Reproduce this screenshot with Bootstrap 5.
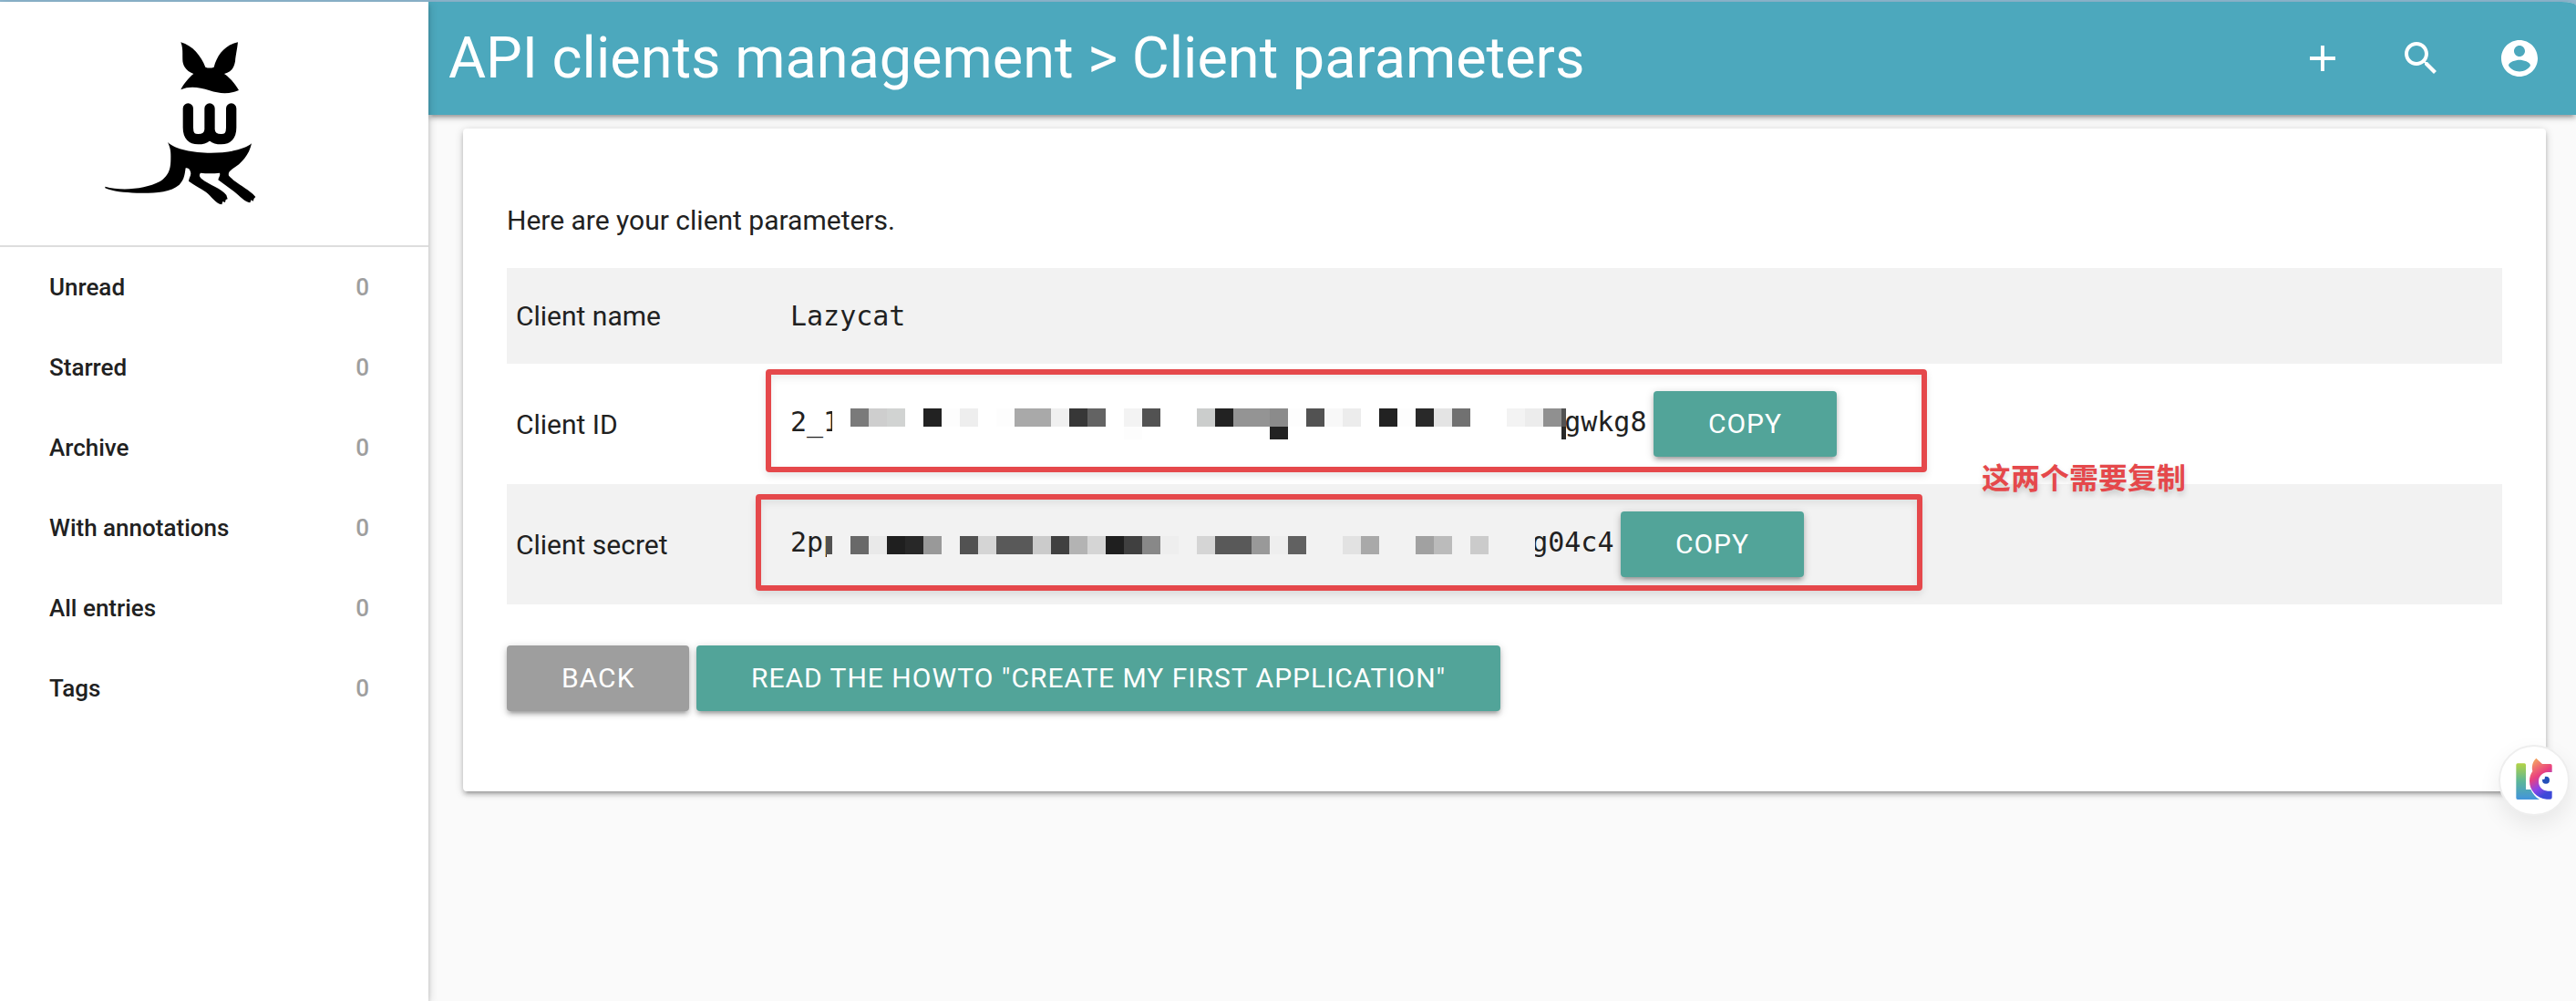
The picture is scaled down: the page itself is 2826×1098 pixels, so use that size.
<!DOCTYPE html>
<html lang="en">
<head>
<meta charset="utf-8">
<meta name="viewport" content="width=device-width, initial-scale=1">
<title>API clients management</title>
<link rel="stylesheet" href="https://cdn.jsdelivr.net/npm/bootstrap@5.3.0/dist/css/bootstrap.min.css">
<style>
  :root { --teal: #52a499; --cyan: #4ca8bd; --signal: #e5484b; --ink: #212121; }
  body { font-family: Roboto, "Liberation Sans", "Noto Sans CJK SC", sans-serif; font-size: 30px; line-height: 45px; color: var(--ink); background: #fafafa; }
  .window-edge { background: #8fb9d1; padding-top: 2px; }
  .lift { box-shadow: 0 4px 4px rgba(0,0,0,.14), 0 6px 2px -4px rgba(0,0,0,.12), 0 2px 10px rgba(0,0,0,.2); }

  .side { width: 470px; min-height: calc(100vh - 2px); background: #fff; z-index: 3; }
  .side-logo { height: 269px; padding: 28px 0 0 100px; border-bottom: 2px solid #ddd; }
  .side-link { height: 88px; padding: 0 65px 0 54px; font-size: 26px; font-weight: 500; color: var(--ink); text-decoration: none; }
  .side-count { color: #9e9e9e; }

  .page { background: #fafafa; border-top-right-radius: 16px 4px; }
  .topbar { min-height: 124px; padding: 0 8px 0 22px; background: var(--cyan); border-top-right-radius: 16px 4px; position: relative; z-index: 2; }
  .topbar h1 { font-size: 63px; line-height: 124px; font-weight: 400; color: #fff; }
  .tool { padding: 0 30px; color: #fff; line-height: 0; }

  .panel { margin: 15px 33px 0 38px; padding: 78px 48px 88px; background: #fff; border-radius: 4px; }
  .panel-intro { margin-bottom: 30px; }
  .params { color: var(--ink); --bs-table-color: var(--ink); margin-bottom: 45px; }
  .params > tbody > tr > * { padding: 30px 10px; font-weight: 400; }
  .params > tbody > tr:nth-child(odd) > * { background: #f2f2f2; }
  .params th { width: 301px; }
  .params code { font-family: "DejaVu Sans Mono", monospace; font-size: 30px; color: var(--ink); }

  .act { height: 72px; padding: 0 60px; border: 0; border-radius: 4px; font-size: 30px; line-height: 72px; letter-spacing: 1px; text-transform: uppercase; color: #fff; background: var(--teal); }
  .act:hover { color: #fff; background: #469589; }
  .act-muted { background: #9e9e9e; }

  .mosaic { position: relative; z-index: 1; height: 36px; vertical-align: -11px; margin-left: -8px; overflow: visible; }
  .frame { position: absolute; border: 6px solid var(--signal); border-radius: 4px; box-shadow: 0 4px 8px rgba(0,0,0,.1), inset 0 4px 8px rgba(0,0,0,.08); pointer-events: none; }
  .frame-id { left: -17px; top: 6px; width: 1274px; height: 113px; }
  .frame-secret { left: -28px; top: 11px; width: 1280px; height: 106px; }
  .remark { position: absolute; left: 1317px; top: -32px; font: 700 32px/46px "Noto Sans CJK SC", sans-serif; color: var(--signal); text-shadow: 0 4px 6px rgba(0,0,0,.18); white-space: nowrap; }

  .helper { position: fixed; right: 7px; top: 817px; width: 78px; height: 78px; padding: 0; border: 2px solid #eee; border-radius: 50%; background: #fff; box-shadow: 0 10px 24px rgba(0,0,0,.08); z-index: 5; line-height: 0; }
</style>
<script src="https://cdn.jsdelivr.net/npm/bootstrap@5.3.0/dist/js/bootstrap.bundle.min.js"></script>
</head>
<body>
<div class="window-edge d-flex">
  <aside class="side lift position-relative flex-shrink-0">
    <div class="side-logo">
      <a href="#" aria-label="Home">
        <svg class="d-block" width="200" height="210" viewBox="0 0 600 630" fill="#000">
          <path d="M295 49C335 60 362 95 376 131Q390 136 404 131C415 90 440 58 483 49C480 75 476 90 474 112C470 135 460 147 438 153C460 168 475 188 486 207C450 222 420 217 390 208C355 197 325 192 295 205C305 185 322 165 337 153C310 143 301 122 301 108C300 85 303 70 295 49Z"/>
          <path d="M319 267V330C319 358 332 368 352 368C375 368 390 358 390 335V267M461 267V330C461 358 448 368 428 368C405 368 390 358 390 335" fill="none" stroke="#000" stroke-width="34" stroke-linecap="round"/>
          <path d="M252 378C300 424 480 424 528 382C520 420 495 448 465 466C453 475 451 480 453 488C470 508 510 528 532 548L541 558L536 563L533 572L527 568L523 577C505 575 490 555 470 540L418 502C420 492 426 488 423 479Q390 483 360 479C355 485 356 492 362 497C390 520 430 530 445 552L449 565L443 567L441 576L433 573L430 583C410 580 395 555 378 542C360 530 340 520 321 506C322 495 328 490 328 480C325 466 320 463 311 463C308 480 308 500 290 518C260 545 200 546 150 545C110 544 70 540 46 529V524C100 540 180 532 225 508C262 485 262 455 262 425C262 405 260 395 252 378Z"/>
        </svg>
      </a>
    </div>
    <nav>
      <a class="side-link d-flex align-items-center justify-content-between" href="#"><span>Unread</span><span class="side-count">0</span></a>
      <a class="side-link d-flex align-items-center justify-content-between" href="#"><span>Starred</span><span class="side-count">0</span></a>
      <a class="side-link d-flex align-items-center justify-content-between" href="#"><span>Archive</span><span class="side-count">0</span></a>
      <a class="side-link d-flex align-items-center justify-content-between" href="#"><span>With annotations</span><span class="side-count">0</span></a>
      <a class="side-link d-flex align-items-center justify-content-between" href="#"><span>All entries</span><span class="side-count">0</span></a>
      <a class="side-link d-flex align-items-center justify-content-between" href="#"><span>Tags</span><span class="side-count">0</span></a>
    </nav>
  </aside>

  <div class="page flex-grow-1">
    <header class="topbar lift d-flex align-items-center justify-content-between">
      <h1 class="m-0">API clients management &gt; Client parameters</h1>
      <div class="d-flex">
        <a class="tool" href="#" aria-label="Add"><svg width="48" height="48" viewBox="0 0 24 24" fill="currentColor"><path d="M19 13h-6v6h-2v-6H5v-2h6V5h2v6h6v2z"/></svg></a>
        <a class="tool" href="#" aria-label="Search"><svg width="48" height="48" viewBox="0 0 24 24" fill="currentColor"><path d="M15.5 14h-.79l-.28-.27C15.41 12.59 16 11.11 16 9.500 16 5.910 13.090 3 9.500 3S3 5.910 3 9.500 5.910 16 9.500 16c1.610 0 3.090-.59 4.230-1.570l.27.28v.79l5 4.990L20.490 19l-4.990-5zm-6 0C7.010 14 5 11.990 5 9.500S7.010 5 9.500 5 14 7.010 14 9.500 11.990 14 9.500 14z"/></svg></a>
        <a class="tool" href="#" aria-label="Account"><svg width="48" height="48" viewBox="0 0 24 24" fill="currentColor"><path d="M12 2C6.480 2 2 6.480 2 12s4.480 10 10 10 10-4.480 10-10S17.520 2 12 2zm0 3c1.660 0 3 1.340 3 3s-1.340 3-3 3-3-1.340-3-3 1.340-3 3-3zm0 14.200c-2.500 0-4.710-1.280-6-3.220.03-1.990 4-3.080 6-3.080 1.990 0 5.970 1.090 6 3.080-1.290 1.940-3.500 3.220-6 3.220z"/></svg></a>
      </div>
    </header>

    <main class="panel lift">
      <p class="panel-intro">Here are your client parameters.</p>
      <table class="table table-borderless align-middle params">
        <tbody>
          <tr>
            <th scope="row">Client name</th>
            <td><code>Lazycat</code></td>
          </tr>
          <tr>
            <th scope="row">Client ID</th>
            <td class="position-relative text-nowrap"><code>2_1</code><svg class="mosaic" width="803" viewBox="0 0 803 36" shape-rendering="crispEdges" aria-hidden="true">
                <rect width="800" height="36" fill="#fff"/>
                <g transform="translate(20 0)">
                  <path fill="#7a7a7a" d="M0 0h20v20H0z"/><path fill="#cecece" d="M20 0h20v20H20z"/><path fill="#d1d3d2" d="M40 0h20v20H40z"/>
                  <path fill="#222" d="M80 0h20v20H80zM400 0h20v20h-20zM460 20h20v14h-20zM580 0h20v20h-20z"/><path fill="#eee" d="M120 0h20v20h-20z"/>
                  <path fill="#fdfdfd" d="M100 0h20v20h-20zM160 0h20v20h-20zM480 0h20v20h-20zM600 0h20v20h-20zM300 20h20v14h-20z"/>
                  <path fill="#a9a9a9" d="M180 0h40v20h-40z"/><path fill="#f0f0f0" d="M220 0h20v20h-20z"/><path fill="#373737" d="M240 0h20v20h-20z"/><path fill="#636363" d="M260 0h20v20h-20z"/>
                  <path fill="#f3f3f3" d="M300 0h20v20h-20zM720 0h20v20h-20z"/><path fill="#525252" d="M320 0h20v20h-20zM500 0h20v20h-20zM780 0h5v20h-5z"/>
                  <path fill="#cbcdcc" d="M380 0h20v20h-20z"/><path fill="#949494" d="M420 0h40v20h-40z"/><path fill="#8b8b8b" d="M460 0h20v20h-20z"/>
                  <path fill="#f8f8f8" d="M520 0h20v20h-20z"/><path fill="#ececec" d="M540 0h20v20h-20zM740 0h20v20h-20z"/><path fill="#292929" d="M620 0h20v20h-20zM780 20h5v14h-5z"/>
                  <path fill="#e4e4e4" d="M640 0h20v20h-20z"/><path fill="#717171" d="M660 0h20v20h-20z"/><path fill="#909090" d="M760 0h20v20h-20z"/>
                </g>
              </svg><code>gwkg8</code>
              <button type="button" class="btn act lift align-middle">Copy</button>
              <div class="frame frame-id"></div>
            </td>
          </tr>
          <tr>
            <th scope="row">Client secret</th>
            <td class="position-relative text-nowrap"><code>2pp</code><svg class="mosaic" width="767" viewBox="0 0 767 36" shape-rendering="crispEdges" aria-hidden="true">
                <path fill="#f2f2f2" d="M-6 0h777v36H-6z"/>
                <path fill="#525252" d="M-7 8h7v20h-7z"/>
                <g transform="translate(20 8)">
                  <path fill="#696969" d="M0 0h20v20H0z"/><path fill="#e9e9e9" d="M20 0h20v20H20z"/><path fill="#1f1f1f" d="M40 0h20v20H40zM280 0h20v20h-20z"/><path fill="#282828" d="M60 0h20v20H60z"/><path fill="#999" d="M80 0h20v20H80zM440 0h20v20h-20z"/>
                  <path fill="#525252" d="M120 0h20v20h-20z"/><path fill="#d5d5d5" d="M140 0h20v20h-20zM260 0h20v20h-20zM380 0h20v20h-20z"/><path fill="#595959" d="M160 0h40v20h-40zM400 0h40v20h-40z"/>
                  <path fill="#cbcbcb" d="M200 0h20v20h-20zM680 0h20v20h-20z"/><path fill="#404040" d="M220 0h20v20h-20zM300 0h20v20h-20z"/><path fill="#b3b3b3" d="M240 0h20v20h-20z"/>
                  <path fill="#888" d="M320 0h20v20h-20z"/><path fill="#eee" d="M340 0h20v20h-20zM460 0h20v20h-20z"/><path fill="#616161" d="M480 0h20v20h-20z"/>
                  <path fill="#e2e2e2" d="M540 0h20v20h-20z"/><path fill="#a9a9a9" d="M560 0h20v20h-20z"/><path fill="#a1a1a1" d="M620 0h20v20h-20z"/><path fill="#bbb" d="M640 0h20v20h-20z"/>
                </g>
              </svg><code>g04c4</code>
              <button type="button" class="btn act lift align-middle">Copy</button>
              <div class="frame frame-secret"></div>
              <div class="remark" lang="zh-CN">这两个需要复制</div>
            </td>
          </tr>
        </tbody>
      </table>
      <div>
        <a class="btn act act-muted lift align-top" href="#">Back</a>
        <a class="btn act lift align-top" href="#">Read the howto "Create my first application"</a>
      </div>
    </main>
  </div>
</div>

<button type="button" class="helper" aria-label="Assistant">
  <svg width="74" height="74" viewBox="129 117 222 222">
    <defs>
      <linearGradient id="stem" x1="0" y1="0" x2="0" y2="1"><stop offset="0" stop-color="#b3d345"/><stop offset=".5" stop-color="#5cb699"/><stop offset="1" stop-color="#4294dc"/></linearGradient>
      <linearGradient id="cat" x1="0" y1="0" x2=".35" y2="1"><stop offset="0" stop-color="#f4c25c"/><stop offset=".28" stop-color="#f0736f"/><stop offset=".5" stop-color="#e9407f"/><stop offset=".78" stop-color="#8a45ea"/><stop offset="1" stop-color="#3d49d8"/></linearGradient>
    </defs>
    <path fill="url(#stem)" d="M186 172H208Q213 172 213 177V258H229C235 272 245 284 258 291H186Q181 291 181 286V177Q181 172 186 172Z"/>
    <path fill="url(#cat)" d="M247 155L267 174H294Q299 174 299 179V201H285C266 202 255 215 255 232C255 250 267 262 285 263H299V284Q299 290 293 290H282C247 286 225 260 225 230C225 217 229 206 235 198C231 182 235 166 247 155Z"/>
    <circle cx="279" cy="227" r="12" fill="#2450b8"/><circle cx="270" cy="219" r="6" fill="#fff"/>
  </svg>
</button>
</body>
</html>
